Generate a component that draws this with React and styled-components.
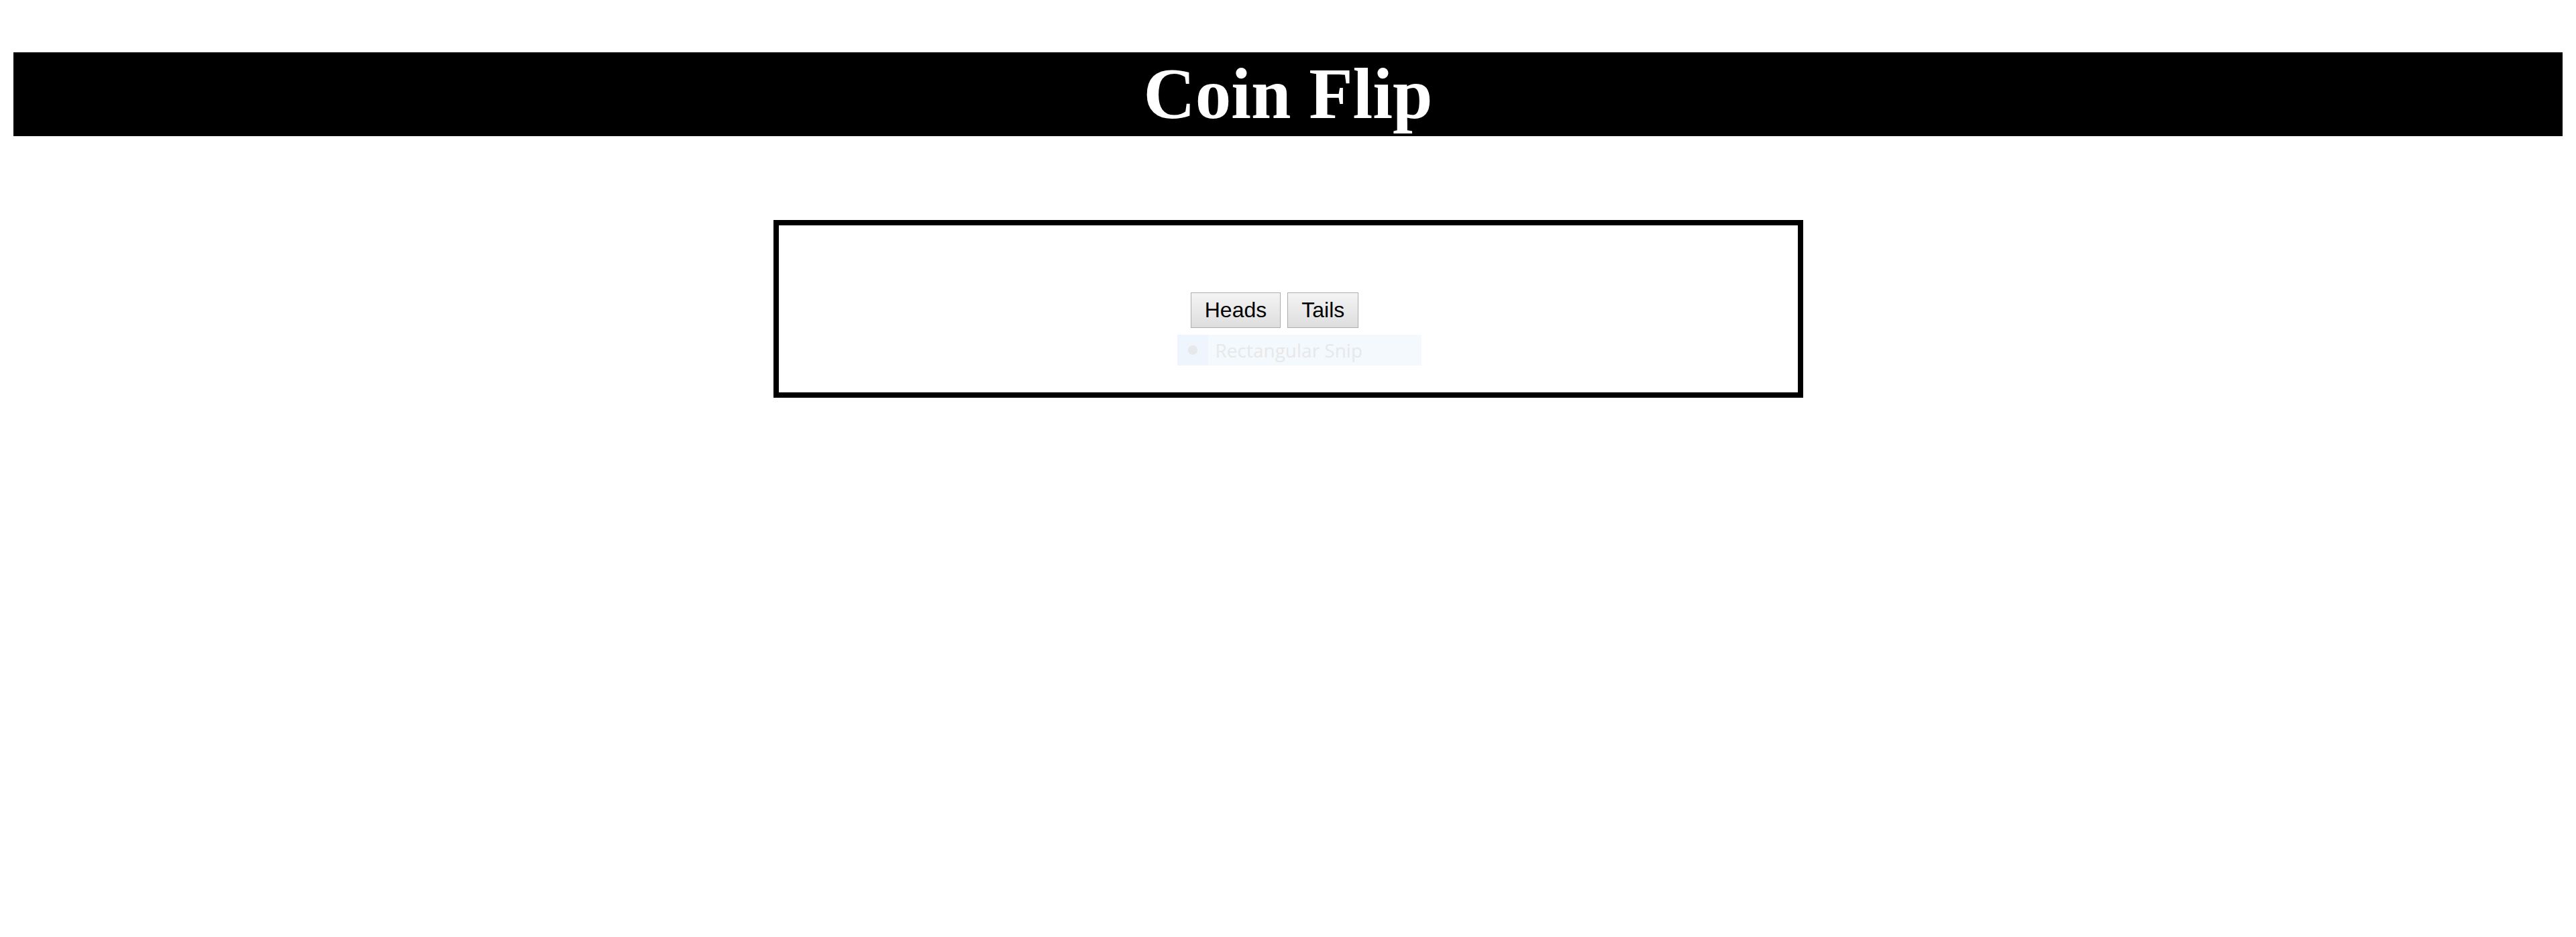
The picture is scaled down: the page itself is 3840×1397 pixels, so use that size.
import styled, { createGlobalStyle } from "styled-components";

const GlobalStyle = createGlobalStyle`
  body {
    margin: 0;
    background: #ffffff;
    font-family: "Liberation Serif", "Times New Roman", serif;
  }
`;

const Header = styled.header`
  margin: 78px 20px 0;
  height: 125px;
  background: #000000;
  display: flex;
  align-items: center;
  justify-content: center;
`;

const Title = styled.h1`
  margin: 0;
  color: #ffffff;
  font-family: "Liberation Serif", "Times New Roman", serif;
  font-size: 107px;
  font-weight: 700;
  line-height: 1;
`;

const Board = styled.main`
  position: relative;
  box-sizing: border-box;
  width: 1535px;
  height: 265px;
  margin: 125px auto 0;
  border: 8px solid #000000;
  background: #ffffff;
`;

const ButtonRow = styled.div`
  display: flex;
  justify-content: center;
  gap: 10px;
  padding: 100px 40px 0 0;
`;

const FlipButton = styled.button`
  height: 53px;
  padding: 0 20px;
  border: 1px solid #adadad;
  border-radius: 0;
  background: linear-gradient(to bottom, #f4f4f4, #dedede);
  color: #000000;
  font-family: "Liberation Sans", Arial, sans-serif;
  font-size: 32px;
  cursor: pointer;
`;

const SnipHint = styled.div`
  position: absolute;
  left: 594px;
  top: 163px;
  width: 364px;
  height: 46px;
  display: flex;
  align-items: center;
  background: #f4f9fd;
`;

const SnipIcon = styled.span`
  width: 46px;
  height: 100%;
  display: flex;
  align-items: center;
  justify-content: center;
  background: #eef5fd;

  &::before {
    content: "";
    width: 14px;
    height: 14px;
    border-radius: 50%;
    background: #e6e8ea;
  }
`;

const SnipLabel = styled.span`
  margin-left: 11px;
  color: #e8e8e8;
  font-family: "Open Sans", "Noto Sans", sans-serif;
  font-size: 28px;
  line-height: 1;
`;

const App = () => {
  return (
    <>
      <GlobalStyle />
      <Header>
        <Title>Coin Flip</Title>
      </Header>
      <Board>
        <ButtonRow>
          <FlipButton>Heads</FlipButton>
          <FlipButton>Tails</FlipButton>
        </ButtonRow>
        <SnipHint>
          <SnipIcon />
          <SnipLabel>Rectangular Snip</SnipLabel>
        </SnipHint>
      </Board>
    </>
  );
};

export default App;
